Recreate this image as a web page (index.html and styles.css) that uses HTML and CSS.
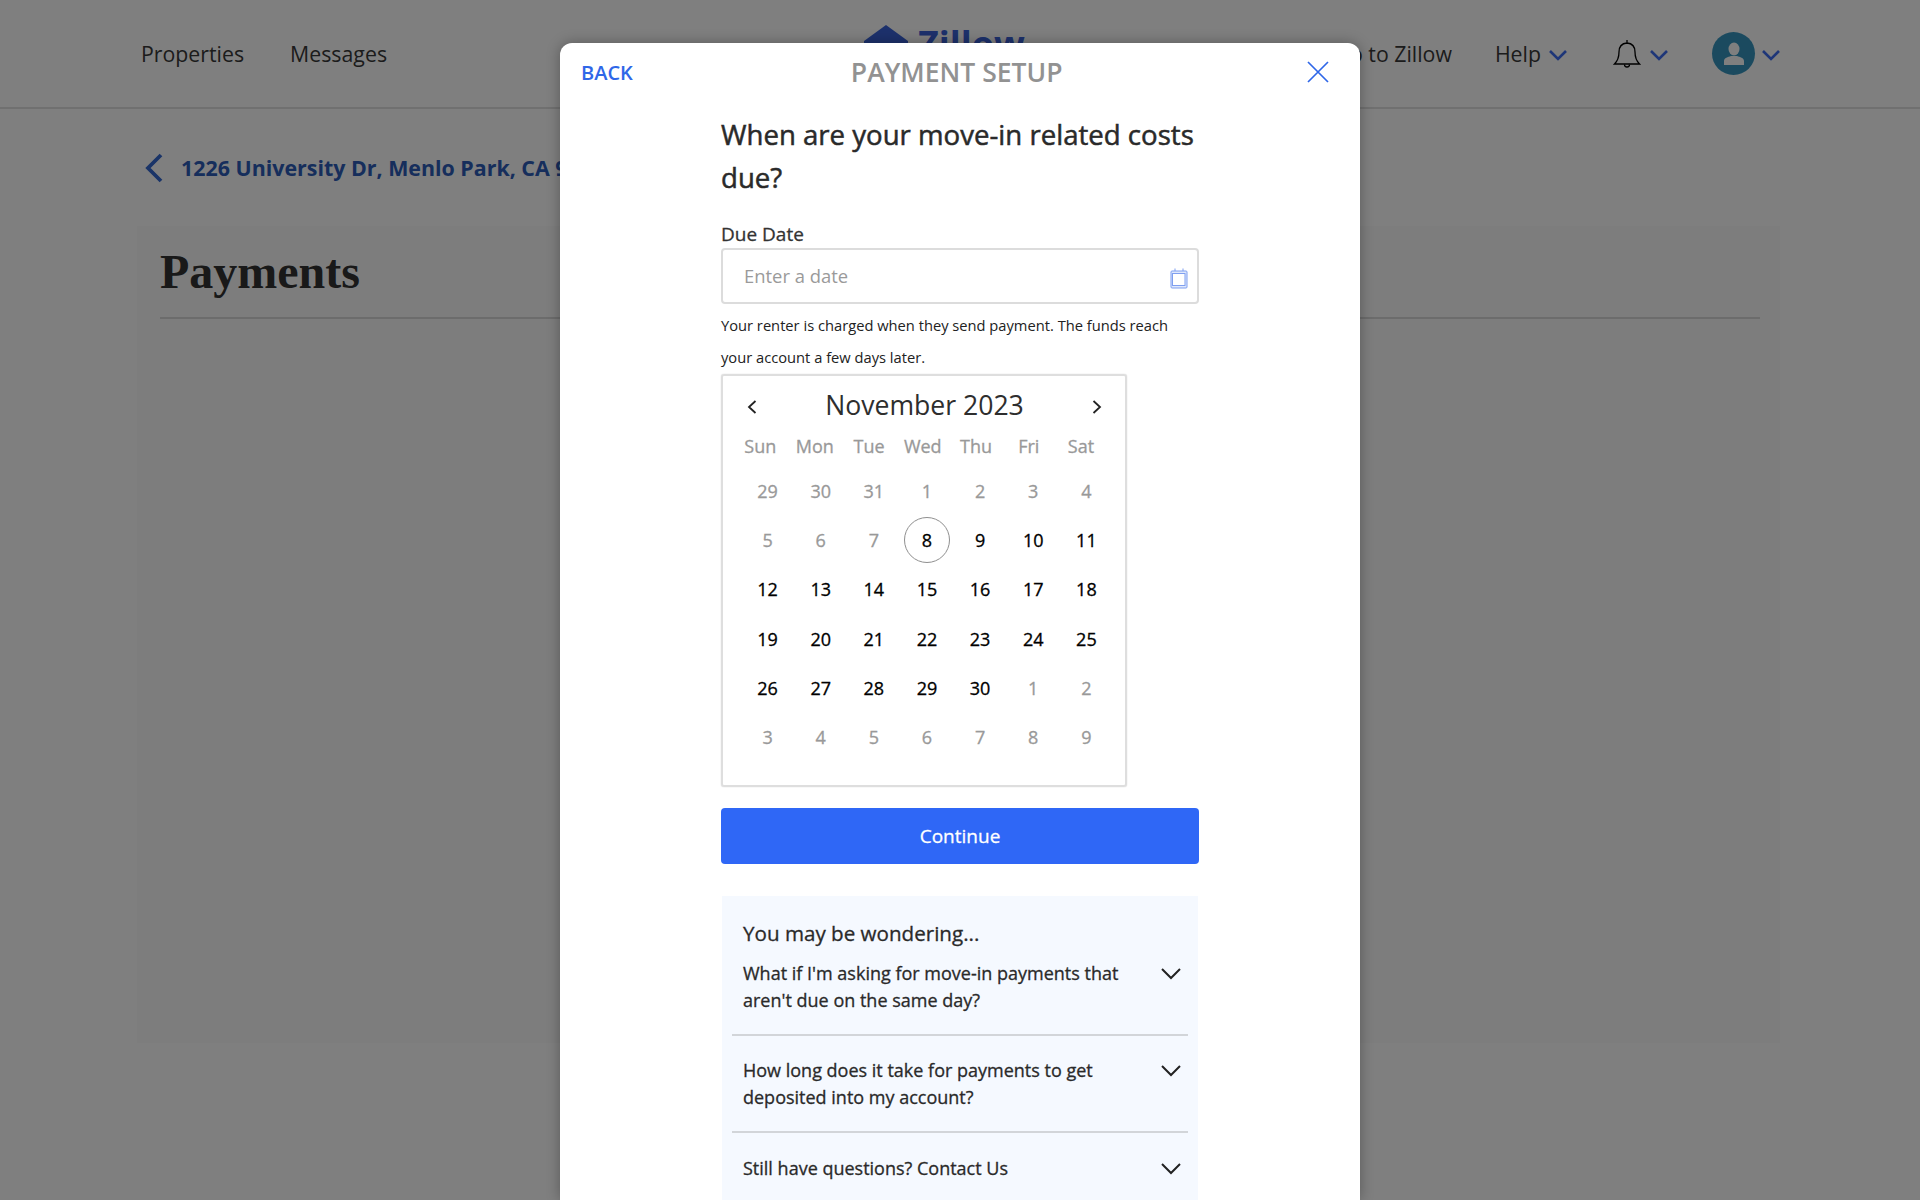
FILE: index.html
```html
<!DOCTYPE html>
<html lang="en">
<head>
  <meta charset="UTF-8" />
  <title>Payments</title>
  <link rel="stylesheet" href="styles.css">
</head>
<body>
  <!-- Page behind the dialog -->
  <header class="top-bar">
    <nav class="main-nav">
      <a>Properties</a>
      <a>Messages</a>
    </nav>
    <div class="logo">
      <svg class="logo-house" width="44" height="30" viewBox="0 0 44 30"><path d="M22 0 L44 16 V30 H0 V16 Z" fill="#3a63d8"/></svg>
      <span class="logo-text">Zillow</span>
    </div>
    <div class="top-icons">
      <a class="go-link">Go to Zillow</a>
      <a class="help-link">Help
        <svg class="nav-chev" width="20" height="12" viewBox="0 0 20 12"><path d="M2 2 L10 10 L18 2" /></svg>
      </a>
      <span class="bell-group">
        <svg width="28" height="30" viewBox="0 0 28 30" fill="none" stroke="#000" stroke-width="1.300"><path d="M14 1 C14 3 14 3 14 4 C8 4.500 6 9 6 13 C6 19 4.500 22 1.500 25 H26.500 C23.500 22 22 19 22 13 C22 9 20 4.500 14 4 Z"/><path d="M11.500 25.500 A2.500 2.500 0 0 0 16.500 25.500"/></svg>
        <svg class="nav-chev" width="20" height="12" viewBox="0 0 20 12"><path d="M2 2 L10 10 L18 2" /></svg>
      </span>
      <span class="user-group">
        <span class="avatar">
          <svg width="22" height="24" viewBox="0 0 22 24" fill="#fff"><ellipse cx="11" cy="7" rx="5.500" ry="6.500"/><path d="M1 23 V19 C1 16 5 15 8 14 H14 C17 15 21 16 21 19 V23 Z"/></svg>
        </span>
        <svg class="nav-chev" width="20" height="12" viewBox="0 0 20 12"><path d="M2 2 L10 10 L18 2" /></svg>
      </span>
    </div>
  </header>

  <main class="page">
    <a class="crumb">
      <svg width="20" height="30" viewBox="0 0 20 30" fill="none"><path d="M17 2 L4 15 L17 28" /></svg>
      1226 University Dr, Menlo Park, CA 94025
    </a>
    <section class="card">
      <h1>Payments</h1>
    </section>
  </main>

  <div class="overlay"></div>

  <!-- Payment setup dialog -->
  <div class="modal">
    <div class="modal-head">
      <a class="back-link">BACK</a>
      <span class="modal-title">PAYMENT SETUP</span>
      <svg class="close-x" width="22" height="22" viewBox="0 0 22 22"><path d="M1 1 L21 21 M21 1 L1 21" /></svg>
    </div>

    <div class="modal-body">
      <h2>When are your move-in related costs due?</h2>
      <label class="field-label">Due Date</label>
      <div class="date-input">
        <span class="placeholder">Enter a date</span>
        <svg width="18" height="21" viewBox="0 0 18 21" fill="none" stroke="#7f9ff0" stroke-width="1"><rect x="1" y="3" width="16" height="17" rx="1" fill="#dfe8fc"/><rect x="2.500" y="5.500" width="12.500" height="12" fill="#fff"/><path d="M5 0.500 V3 M13 0.500 V3"/></svg>
      </div>
      <p class="help-text">Your renter is charged when they send payment. The funds reach your account a few days later.</p>

      <div class="calendar">
        <div class="cal-head">
          <svg width="12" height="16" viewBox="0 0 12 16"><path d="M9.500 2 L3 8 L9.500 14" /></svg>
          <span class="cal-month">November 2023</span>
          <svg width="12" height="16" viewBox="0 0 12 16"><path d="M2.500 2 L9 8 L2.500 14" /></svg>
        </div>
        <div class="cal-weekdays">
          <span>Sun</span><span>Mon</span><span>Tue</span><span>Wed</span><span>Thu</span><span>Fri</span><span>Sat</span>
        </div>
        <div class="cal-days">
          <span class="off">29</span><span class="off">30</span><span class="off">31</span><span class="off">1</span><span class="off">2</span><span class="off">3</span><span class="off">4</span>
          <span class="off">5</span><span class="off">6</span><span class="off">7</span><span class="today">8</span><span>9</span><span>10</span><span>11</span>
          <span>12</span><span>13</span><span>14</span><span>15</span><span>16</span><span>17</span><span>18</span>
          <span>19</span><span>20</span><span>21</span><span>22</span><span>23</span><span>24</span><span>25</span>
          <span>26</span><span>27</span><span>28</span><span>29</span><span>30</span><span class="off">1</span><span class="off">2</span>
          <span class="off">3</span><span class="off">4</span><span class="off">5</span><span class="off">6</span><span class="off">7</span><span class="off">8</span><span class="off">9</span>
        </div>
      </div>

      <button class="continue-btn">Continue</button>

      <div class="faq">
        <h3>You may be wondering...</h3>
        <div class="faq-item first">
          <span class="faq-q">What if I'm asking for move-in payments that aren't due on the same day?</span>
          <svg width="20" height="12" viewBox="0 0 20 12"><path d="M1 1 L10 10 L19 1" /></svg>
        </div>
        <div class="faq-item">
          <span class="faq-q">How long does it take for payments to get deposited into my account?</span>
          <svg width="20" height="12" viewBox="0 0 20 12"><path d="M1 1 L10 10 L19 1" /></svg>
        </div>
        <div class="faq-item last">
          <span class="faq-q">Still have questions? Contact Us</span>
          <svg width="20" height="12" viewBox="0 0 20 12"><path d="M1 1 L10 10 L19 1" /></svg>
        </div>
      </div>
    </div>
  </div>
</body>
</html>
```

FILE: styles.css
```css
* {
  margin: 0;
  padding: 0;
  box-sizing: border-box;
  font-family: 'Open Sans', 'Liberation Sans', sans-serif;
}

body, html {
  height: 100%;
  overflow: hidden;
}

body {
  background: #fff;
  position: relative;
}

.overlay {
  position: absolute;
  top: 0;
  left: 0;
  height: 100%;
  width: 100%;
  background: rgba(0, 0, 0, 0.5);
}

/* Top bar */
.top-bar {
  height: 109px;
  padding: 0 139px 0 141px;
  display: flex;
  align-items: center;
  border-bottom: 2px solid #e0e0e0;
  color: #383838;
  font-size: 21.3px;
}

.main-nav {
  flex: 0 0 723px;
  display: flex;
  gap: 46px;
}

.logo {
  display: flex;
  align-items: flex-start;
  gap: 10px;
  align-self: flex-start;
  padding-top: 25px;
}

.logo-text {
  font-size: 36px;
  font-weight: 700;
  line-height: 36px;
  color: #3a63d8;
  margin-top: 1px;
}

.top-icons {
  margin-left: auto;
  display: flex;
  align-items: center;
}

.go-link {
  margin-right: 43px;
}

.help-link,
.bell-group,
.user-group {
  display: flex;
  align-items: center;
}

.help-link {
  gap: 7px;
  margin-right: 45px;
}

.bell-group {
  gap: 8px;
  margin-right: 43px;
}

.user-group {
  gap: 6px;
}

.nav-chev {
  fill: none;
  stroke: #3c6cf0;
  stroke-width: 2.6;
  margin-top: 3px;
}

.avatar {
  width: 43px;
  height: 43px;
  border-radius: 50%;
  background: #3695bf;
  display: flex;
  align-items: center;
  justify-content: center;
}

/* Page content */
.page {
  padding: 0 140px 0 137px;
}

.crumb {
  height: 117px;
  padding-left: 7px;
  display: flex;
  align-items: center;
  gap: 17px;
  font-size: 21.4px;
  font-weight: 700;
  color: #2c5cb8;
}

.crumb svg path {
  stroke: #3468d0;
  stroke-width: 3.8;
}

.card {
  height: 817px;
  padding: 20px 20px 0 23px;
  background: #fbfbfb;
}

.card h1 {
  height: 73px;
  border-bottom: 2px solid #d8d8d8;
  font-family: 'Liberation Serif', serif;
  font-size: 48px;
  font-weight: 700;
  line-height: 52px;
  color: #333;
}

/* Dialog */
.modal {
  position: absolute;
  top: 43px;
  left: 560px;
  bottom: 0;
  width: 800px;
  background: #fff;
  border-radius: 12px 12px 0 0;
  box-shadow: 0 0 14px rgba(0, 0, 0, 0.3);
  overflow: hidden;
}

.modal-head {
  height: 58px;
  padding-left: 21px;
  display: flex;
  align-items: center;
}

.back-link {
  font-size: 20px;
  font-weight: 600;
  color: #2f67e8;
}

.modal-title {
  margin-left: 218px;
  font-size: 26.5px;
  font-weight: 600;
  color: #929292;
}

.close-x {
  margin-left: auto;
  margin-right: 31px;
  fill: none;
  stroke: #2f67e8;
  stroke-width: 1.7;
}

.modal-body {
  margin-left: 161px;
  width: 478px;
  padding-top: 12px;
}

/* no medium weight installed, a thin stroke fakes it */
.modal-body h2 {
  font-size: 27.6px;
  font-weight: 400;
  line-height: 43px;
  color: #2a2a2a;
  -webkit-text-stroke: 0.5px;
}

.field-label {
  display: block;
  margin-top: 23px;
  font-size: 19px;
  line-height: 24px;
  color: #333;
  -webkit-text-stroke: 0.3px;
}

.date-input {
  margin-top: 2px;
  height: 56px;
  padding: 0 9px 0 21px;
  display: flex;
  align-items: center;
  justify-content: space-between;
  border: 2px solid #dcdcdc;
  border-radius: 4px;
}

.placeholder {
  font-size: 18.400px;
  line-height: 24px;
  padding-bottom: 1px;
  color: #9a9a9a;
}

.date-input svg {
  margin-top: 4px;
}

.help-text {
  margin-top: 5px;
  padding-bottom: 1px;
  font-size: 14.700px;
  line-height: 32px;
  color: #222;
}

/* Calendar */
.calendar {
  width: 406px;
  height: 413px;
  border: 2px solid #dedede;
  border-radius: 3px;
  box-shadow: 0 0 1px #bbb;
}

.cal-head {
  height: 57px;
  padding: 0 22px 0 23px;
  display: flex;
  align-items: center;
  justify-content: space-between;
}

.cal-head svg {
  fill: none;
  stroke: #222;
  stroke-width: 1.800;
  margin-top: 4px;
}

.cal-month {
  font-size: 26.600px;
  color: #2e2e2e;
}

.cal-weekdays {
  height: 26px;
  padding-left: 10px;
  display: grid;
  grid-template-columns: 54.5px 54.5px 54px 53.5px 53px 52.5px 52px;
  align-items: center;
  text-align: center;
  font-size: 18px;
  color: #999;
  -webkit-text-stroke: 0.3px;
}

.cal-days {
  margin-top: 7px;
  padding-left: 18px;
  display: grid;
  grid-template-columns: repeat(7, 53.150px);
  grid-auto-rows: 49.300px;
  align-items: center;
  justify-items: center;
  font-size: 18px;
  color: #000;
  -webkit-text-stroke: 0.3px;
}

.cal-days span {
  width: 46px;
  height: 46px;
  display: flex;
  align-items: center;
  justify-content: center;
}

.cal-days .off {
  color: #999;
}

.cal-days .today {
  border: 1px solid #8f8f8f;
  border-radius: 50%;
}

.continue-btn {
  display: block;
  width: 100%;
  height: 56px;
  margin-top: 21px;
  padding-bottom: 1px;
  border: none;
  border-radius: 4px;
  background: #2f67f6;
  color: #fff;
  font-size: 19px;
  -webkit-text-stroke: 0.3px;
}

/* FAQ */
.faq {
  margin-top: 32px;
  margin-left: 1px;
  margin-right: 1px;
  height: 400px;
  padding-top: 23px;
  background: #f5f9ff;
}

.faq h3 {
  padding-left: 21px;
  padding-bottom: 1px;
  font-size: 20.600px;
  font-weight: 400;
  line-height: 28px;
  color: #2a2a2a;
  -webkit-text-stroke: 0.3px;
}

.faq-item {
  margin: 0 10px;
  padding: 21px 7px 20px 11px;
  display: flex;
  justify-content: space-between;
  border-bottom: 2px solid #d2d5d9;
}

.faq-item.first {
  padding-top: 12px;
}

.faq-item.last {
  padding-top: 22px;
  border-bottom: none;
}

.faq-q {
  width: 395px;
  font-size: 18px;
  line-height: 27px;
  color: #2a2a2a;
  -webkit-text-stroke: 0.3px;
}

.faq-item svg {
  margin-top: 8px;
  fill: none;
  stroke: #222;
  stroke-width: 2;
}
```
